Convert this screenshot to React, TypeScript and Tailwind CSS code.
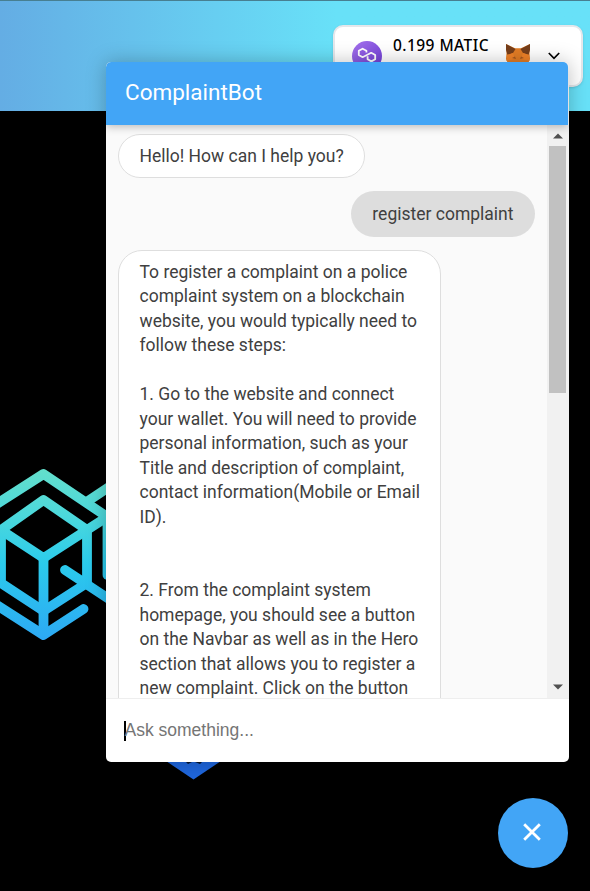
import React from "react";

const steps = `To register a complaint on a police
complaint system on a blockchain
website, you would typically need to
follow these steps:

1. Go to the website and connect
your wallet. You will need to provide
personal information, such as your
Title and description of complaint,
contact information(Mobile or Email
ID).


2. From the complaint system
homepage, you should see a button
on the Navbar as well as in the Hero
section that allows you to register a
new complaint. Click on the button`;

function PolygonIcon() {
  return (
    <svg className="size-[30px] shrink-0" viewBox="0 0 30 30" fill="none">
      <defs>
        <linearGradient id="poly" x1="0" y1="0" x2="1" y2="1">
          <stop stopColor="#a674ee" />
          <stop offset="1" stopColor="#6a38d2" />
        </linearGradient>
      </defs>
      <circle cx="15" cy="15" r="15" fill="url(#poly)" />
      <path
        d="M14.4 11.6V9.8L10.6 7.7L6.8 9.8V14L10.6 16.2L19.2 11.8L23.2 14V18.2L19.4 20.4L15.6 18.2V15.2"
        stroke="white"
        strokeWidth="1.8"
        strokeLinejoin="round"
      />
    </svg>
  );
}

function FoxIcon() {
  return (
    <svg className="size-6 shrink-0" viewBox="0 0 24 24">
      <path d="M0 0L9 4.3H15L24 0L23.5 9L24 15L21 22L15 21L12 23L9 21L3 22L0 15L.5 9Z" fill="#e27c25" />
      <path d="M0 0L9.5 5L7 9L1.5 10.8L0 6Z" fill="#763e1a" />
      <path d="M24 0L14.5 5L17 9L22.5 10.8L24 6Z" fill="#763e1a" />
      <path d="M1 11L7 9L9 15L.5 17ZM23 11L17 9L15 15L23.5 17Z" fill="#f08228" />
      <path d="M6 14L9 12.6L10 15ZM18 14L15 12.6L14 15Z" fill="#a5581f" />
    </svg>
  );
}

function BlockLogo() {
  return (
    <svg className="absolute left-0 top-[450px] h-[340px] w-[240px]" viewBox="0 450 240 340" fill="none">
      <defs>
        <linearGradient id="logo" gradientUnits="userSpaceOnUse" x1="0" y1="468" x2="0" y2="642">
          <stop stopColor="#64dfcb" />
          <stop offset=".28" stopColor="#4bd8dc" />
          <stop offset=".55" stopColor="#2bcbec" />
          <stop offset="1" stopColor="#2da8f4" />
        </linearGradient>
      </defs>
      <g stroke="url(#logo)" strokeWidth="9.8" strokeLinecap="round" strokeLinejoin="round">
        <path d="M-8 507L43.5 474L103 514" />
        <path d="M88 501L118 481" />
        <path d="M1 530L43.5 500L87 530V583L43.5 611L1 583Z" />
        <path d="M1 530L43.5 558L118 510" />
        <path d="M43.5 558V634" />
        <path d="M-8 602L43.5 635L83.5 609" />
        <path d="M65 570L118 605" />
        <path d="M107.5 518V575" />
      </g>
      <path d="M160 757L193.5 779.5L227 757Z" fill="#1f66dc" />
      <path d="M184 760L188 764L192 762H195L200 764L204 760Z" fill="#06152e" />
    </svg>
  );
}

function ScrollBar() {
  return (
    <div className="flex w-[22px] shrink-0 flex-col items-center bg-[#f1f1f1] pr-px">
      <div className="flex h-[21px] items-center justify-center">
        <svg width="10" height="6" viewBox="0 0 10 6"><path d="M0 5.5L5 .5L10 5.5Z" fill="#505050" /></svg>
      </div>
      <div className="h-[247px] w-[17px] bg-[#c1c1c1]" />
      <div className="grow" />
      <div className="flex h-[22px] items-center justify-center">
        <svg width="10" height="6" viewBox="0 0 10 6"><path d="M0 .5L5 5.5L10 .5Z" fill="#505050" /></svg>
      </div>
    </div>
  );
}

export default function App() {
  return (
    <div className="relative h-[891px] w-[590px] overflow-hidden bg-black font-['Roboto',sans-serif]">
      <header className="flex h-[111px] justify-end border-t border-[#477f91] bg-linear-to-r from-[#64ade4] from-0% via-[#68e1f8] via-57% to-[#68e1f8] pr-[7px] pt-6">
        <div className="flex h-[62px] w-[250px] items-start rounded-[10px] border-2 border-[#e5e7eb] bg-white pl-[17px] shadow-sm">
          <div className="pt-[14px]"><PolygonIcon /></div>
          <span className="ml-[11px] mt-[6px] w-[113px] whitespace-nowrap font-['Noto_Sans',sans-serif] text-[15.5px] font-medium leading-6 tracking-[0.45px] text-black">0.199 MATIC</span>
          <div className="pt-[17px]"><FoxIcon /></div>
          <svg className="ml-[18px] mt-[25px]" width="12" height="8" viewBox="0 0 12 8" fill="none"><path d="M.8 1L6 6.3L11.2 1" stroke="black" strokeWidth="1.7" /></svg>
        </div>
      </header>
      <BlockLogo />

      <section className="absolute left-[106px] top-[62px] flex h-[700px] w-[463px] flex-col overflow-hidden rounded-[5px] bg-white shadow-[0_0_20px_rgba(0,0,0,0.25)]">
        <div className="z-10 mr-px flex h-[63px] shrink-0 items-center rounded-t-[5px] bg-[#42a5f6] pl-[19px] pb-px text-[22.5px] text-white shadow-[0_2px_8px_rgba(0,0,0,0.25)]">
          ComplaintBot
        </div>
        <div className="flex h-[573px] shrink-0 overflow-hidden bg-[#fafafa]">
          <div className="flex grow flex-col pl-3 pr-3 pt-[9px] text-[17.5px] leading-[24.5px] text-[#404040]">
            <div className="flex h-11 shrink-0 items-center self-start rounded-[22px] border border-[#dedede] bg-white px-[20.5px]">Hello! How can I help you?</div>
            <div className="mt-[13px] flex h-[46px] shrink-0 items-center self-end rounded-[23px] bg-[#dddddd] px-[21.5px]">register complaint</div>
            <div className="mt-[13px] w-[323px] shrink-0 whitespace-pre rounded-[24px] border border-[#dedede] bg-white px-[20.5px] pt-[8.5px] pb-12">{steps}</div>
          </div>
          <ScrollBar />
        </div>
        <div className="flex grow items-center border-t border-[#eeeeee] pl-[18px]">
          <span className="h-5 w-[1.5px] bg-black" />
          <span className="-ml-px font-['Liberation_Sans',Arial,sans-serif] text-[17.5px] text-[#757575]">Ask something...</span>
        </div>
      </section>

      <button aria-label="Close chat" className="absolute left-[498px] top-[798px] flex size-[70px] items-center justify-center rounded-full bg-[#42a5f6]">
        <svg width="18" height="18" viewBox="0 0 18 18" fill="none" className="-translate-x-[1px] -translate-y-[1px]"><path d="M1.2 1.2L16.8 16.8M16.8 1.2L1.2 16.8" stroke="white" strokeWidth="2.8" /></svg>
      </button>
    </div>
  );
}
